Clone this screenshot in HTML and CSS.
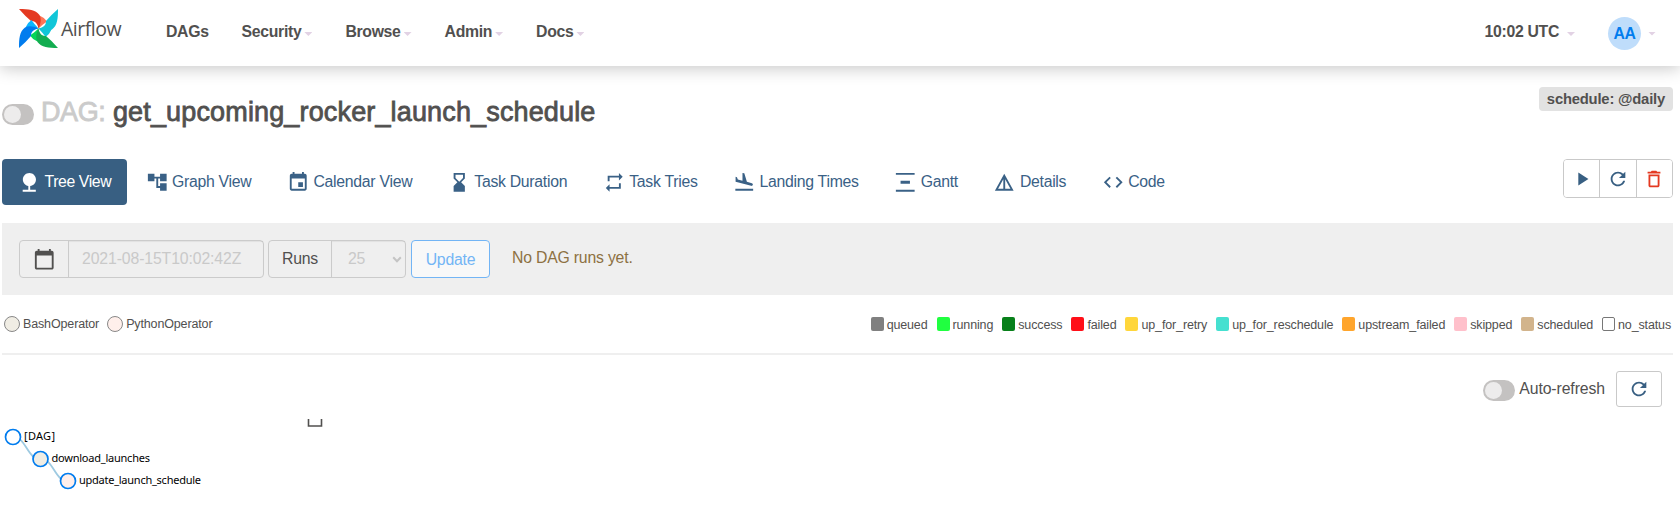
FILE: index.html
```html
<!DOCTYPE html>
<html lang="en">
<head>
<meta charset="utf-8">
<title>get_upcoming_rocker_launch_schedule - Tree - Airflow</title>
<link rel="stylesheet" href="styles.css">
</head>
<body>
<svg class="sprite" width="0" height="0">
  <symbol id="i-refresh" viewBox="0 0 24 24"><path d="M17.65 6.35C16.2 4.9 14.21 4 12 4c-4.42 0-7.99 3.58-7.99 8s3.57 8 7.99 8c3.73 0 6.84-2.55 7.73-6h-2.08c-.82 2.33-3.04 4-5.65 4-3.31 0-6-2.69-6-6s2.69-6 6-6c1.66 0 3.14.69 4.22 1.78L13 11h7V4l-2.35 2.35z"/></symbol>
</svg>
<header class="navbar">
  <a class="brand">
    <svg class="pinwheel" width="39" height="39" viewBox="-19.5 -19.5 39 39">
      <g><path fill="#ff7557" d="M0 0L1-13Q6-11 8.500-7Q4-4 0 0z"/><path fill="#e43921" d="M-19.500-19.500C-10-19.500-3-19 1-13.500C3-10 2.500-5 0 0C-1-5-3-7.500-7.500-7.500Q-13-12-19.500-19.500z"/></g>
      <g transform="rotate(90)"><path fill="#11c6d8" d="M0 0L1-13Q6-11 8.500-7Q4-4 0 0z"/><path fill="#11c6d8" d="M-19.500-19.500C-10-19.500-3-19 1-13.500C3-10 2.500-5 0 0C-1-5-3-7.500-7.500-7.500Q-13-12-19.500-19.500z"/></g>
      <g transform="rotate(180)"><path fill="#04d659" d="M0 0L1-13Q6-11 8.500-7Q4-4 0 0z"/><path fill="#13ad50" d="M-19.500-19.500C-10-19.500-3-19 1-13.500C3-10 2.500-5 0 0C-1-5-3-7.500-7.500-7.500Q-13-12-19.500-19.500z"/></g>
      <g transform="rotate(270)"><path fill="#0cb6ff" d="M0 0L1-13Q6-11 8.500-7Q4-4 0 0z"/><path fill="#017cee" d="M-19.500-19.500C-10-19.500-3-19 1-13.500C3-10 2.500-5 0 0C-1-5-3-7.500-7.500-7.500Q-13-12-19.500-19.500z"/></g>
    </svg>
    <span class="brand-name">Airflow</span>
  </a>
  <nav class="menu">
    <a>DAGs</a>
    <a>Security<i class="caret"></i></a>
    <a>Browse<i class="caret"></i></a>
    <a>Admin<i class="caret"></i></a>
    <a>Docs<i class="caret"></i></a>
  </nav>
  <div class="clock">10:02 UTC<i class="caret"></i></div>
  <div class="user"><span class="avatar">AA</span><i class="caret"></i></div>
</header>

<main class="page">
  <div class="title-row">
    <span class="toggle"></span>
    <h1><span class="muted">DAG:</span> <span class="dag-name">get_upcoming_rocker_launch_schedule</span></h1>
    <span class="schedule">schedule: @daily</span>
  </div>

  <div class="tab-row">
    <nav class="tabs">
      <a class="tab active"><svg class="icon" viewBox="0 0 24 24"><path d="M13 16.12c3.47-.41 6.170-3.360 6.170-6.950 0-3.870-3.130-7-7-7s-7 3.130-7 7c0 3.470 2.520 6.340 5.830 6.890V20H5v2h14v-2h-6v-3.880z"/></svg><span>Tree View</span></a>
      <a class="tab"><svg class="icon" viewBox="0 0 24 24"><path d="M22 11V3h-7v3H9V3H2v8h7V8h2v10h4v3h7v-8h-7v3h-2V8h2v3z"/></svg><span>Graph View</span></a>
      <a class="tab"><svg class="icon" viewBox="0 0 24 24"><path d="M17 12h-5v5h5v-5zM16 1v2H8V1H6v2H5c-1.110 0-1.990.9-1.990 2L3 19c0 1.100.89 2 2 2h14c1.100 0 2-.9 2-2V5c0-1.100-.9-2-2-2h-1V1h-2zm3 18H5V8h14v11z"/></svg><span>Calendar View</span></a>
      <a class="tab"><svg class="icon" viewBox="0 0 24 24"><path d="M18 22l-.01-6L14 12l3.990-4.010L18 2H6v6l4 4-4 3.990V22h12zM8 7.500V4h8v3.500l-4 4-4-4z"/></svg><span>Task Duration</span></a>
      <a class="tab"><svg class="icon" viewBox="0 0 24 24"><path d="M7 7h10v3l4-4-4-4v3H5v6h2V7zm10 10H7v-3l-4 4 4 4v-3h12v-6h-2v4z"/></svg><span>Task Tries</span></a>
      <a class="tab"><svg class="icon" viewBox="0 0 24 24"><path d="M2.500 19h19v2h-19v-2zm16.840-3.150c.8.210 1.620-.26 1.840-1.060.21-.8-.26-1.620-1.060-1.840l-5.310-1.420-2.760-9.020L10.120 2v8.280L5.150 8.950l-.93-2.320-1.450-.39v5.170l16.570 4.440z"/></svg><span>Landing Times</span></a>
      <a class="tab"><svg class="icon" viewBox="0 0 24 24"><path d="M22 2v2H2V2h20zM7 10.500v3h10v-3H7zM2 20v2h20v-2H2z"/></svg><span>Gantt</span></a>
      <a class="tab"><svg class="icon" viewBox="0 0 24 24"><path d="M12 3L2 21h20L12 3zm1 5.920L18.600 19H13V8.920zm-2 0V19H5.400L11 8.920z"/></svg><span>Details</span></a>
      <a class="tab"><svg class="icon" viewBox="0 0 24 24"><path d="M9.400 16.600L4.800 12l4.600-4.600L8 6l-6 6 6 6 1.400-1.400zm5.200 0l4.600-4.600-4.600-4.600L16 6l6 6-6 6-1.400-1.400z"/></svg><span>Code</span></a>
    </nav>
    <div class="actions">
      <button><svg class="icon-sm" viewBox="0 0 24 24"><path d="M8 5v14l11-7z"/></svg></button>
      <button><svg class="icon-sm"><use href="#i-refresh"/></svg></button>
      <button class="danger"><svg class="icon-sm" viewBox="0 0 24 24"><path d="M6 19c0 1.100.9 2 2 2h8c1.100 0 2-.9 2-2V7H6v12zM8 9h8v10H8V9zm7.500-5l-1-1h-5l-1 1H5v2h14V4h-3.500z"/></svg></button>
    </div>
  </div>

  <form class="filter">
    <div class="group date">
      <span class="addon"><svg class="icon" viewBox="0 0 24 24"><path d="M20 3h-1V1h-2v2H7V1H5v2H4c-1.100 0-2 .9-2 2v16c0 1.100.9 2 2 2h16c1.100 0 2-.9 2-2V5c0-1.100-.9-2-2-2zm0 18H4V8h16v13z"/></svg></span>
      <span class="field">2021-08-15T10:02:42Z</span>
    </div>
    <div class="group runs">
      <span class="addon">Runs</span>
      <span class="field">25<svg class="chevron" viewBox="0 0 10 7"><path d="M1.200 1.200L5 5.200l3.800-4"/></svg></span>
    </div>
    <span class="update">Update</span>
    <span class="notice">No DAG runs yet.</span>
  </form>

  <div class="legend">
    <div class="operators">
      <span><i class="bash"></i>BashOperator</span>
      <span><i class="python"></i>PythonOperator</span>
    </div>
    <div class="states">
      <span><i class="queued"></i>queued</span>
      <span><i class="running"></i>running</span>
      <span><i class="success"></i>success</span>
      <span><i class="failed"></i>failed</span>
      <span><i class="retry"></i>up_for_retry</span>
      <span><i class="reschedule"></i>up_for_reschedule</span>
      <span><i class="upstream"></i>upstream_failed</span>
      <span><i class="skipped"></i>skipped</span>
      <span><i class="scheduled"></i>scheduled</span>
      <span><i class="none"></i>no_status</span>
    </div>
  </div>

  <div class="refresh-row">
    <span class="toggle"></span>
    <span class="refresh-label">Auto-refresh</span>
    <button class="refresh"><svg class="icon-sm"><use href="#i-refresh"/></svg></button>
  </div>

  <svg class="tree" width="400" height="92" viewBox="0 410 400 92">
    <path class="axis" d="M308.500 419v7h13V419"/>
    <g class="links"><path d="M13 437C26.500 437 26.500 459 40.500 459"/><path d="M40.500 459C54 459 54 481 68 481"/></g>
    <g class="nodes"><circle cx="13" cy="437" r="7.500" fill="#fff"/><circle cx="40.500" cy="459" r="7.500" fill="#f0ede4"/><circle cx="68" cy="481" r="7.500" fill="#ffefeb"/></g>
    <text x="24" y="440" textLength="31">[DAG]</text>
    <text x="51.500" y="462" textLength="98.500">download_launches</text>
    <text x="79" y="484" textLength="122">update_launch_schedule</text>
  </svg>
</main>
</body>
</html>
```

FILE: styles.css
```css
* { box-sizing: border-box; }
body {
  margin: 0;
  height: 509px;
  overflow: hidden;
  background: #fff;
  color: #51504f;
  font: 15.800px/20px "Liberation Sans", Arial, sans-serif;
  letter-spacing: -.2px;
}
.sprite { position: absolute; }
svg { display: block; flex: none; fill: currentColor; }
i { display: block; flex: none; }

.navbar {
  display: flex;
  height: 66px;
  padding-left: 19px;
  background: #fff;
  box-shadow: 0 2px 16px rgba(0, 0, 0, .23);
  font-weight: bold;
  letter-spacing: -.32px;
}
.brand { display: flex; width: 147px; padding-top: 9px; gap: 3px; }
.brand-name { padding-top: 9px; font: 400 19.500px/22px "Open Sans", sans-serif; letter-spacing: -.5px; }
.menu { display: flex; padding-top: 20px; gap: 33px; }
.menu a { display: flex; height: 24px; align-items: center; }
.menu a .caret { margin-left: 3px; }
.caret { width: 8px; height: 4px; margin-top: 4px; background: #e2d2e4; clip-path: polygon(0 0, 100% 0, 50% 100%); }
.clock { display: flex; height: 24px; margin: 20px 33px 0 auto; align-items: center; gap: 8px; }
.user { display: flex; height: 33px; margin: 17px 24px 0 0; align-items: center; gap: 7px; }
.user .caret { margin-top: 0; }
.avatar { width: 33px; height: 33px; border-radius: 50%; background: #bfddfb; color: #017cee; text-align: center; line-height: 34px; letter-spacing: -.5px; }

.page { padding: 0 7px 0 2px; }
.title-row { display: flex; height: 93px; padding-top: 21px; }
.toggle { flex: none; width: 32px; height: 21px; border-radius: 11px; background: #c4c2c1; padding: 2px; }
.toggle::before { content: ""; display: block; width: 17px; height: 17px; border-radius: 50%; background: #edecec; }
.title-row .toggle { margin: 17px 7px 0 0; }
h1 { margin: 9px 0 0; font: 27px/32px "Liberation Sans", Arial, sans-serif; letter-spacing: 0; white-space: nowrap; -webkit-text-stroke: .8px currentColor; }
.muted { color: #cbcbcb; letter-spacing: -.4px; }
.dag-name { letter-spacing: .15px; }
.schedule { height: 24px; margin-left: auto; padding: 0 8px; border-radius: 4px; background: #e2e2e2; font-weight: bold; font-size: 14.800px; line-height: 24px; }

.tab-row { display: flex; justify-content: space-between; height: 64px; }
.tabs { display: flex; gap: 2.500px; letter-spacing: -.28px; }
.tab { display: flex; height: 46px; padding: 0 17px 0 16px; align-items: center; gap: 4px; border-radius: 4px; color: #3a6186; white-space: nowrap; }
.tab.active { width: 125px; background: #385f82; color: #fff; letter-spacing: -.4px; }
.icon { width: 22.500px; height: 22.500px; }
.icon-sm { width: 22px; height: 22px; }
button { display: flex; align-items: center; justify-content: center; padding: 0; background: #fff; border: 0; color: #385f82; }
.actions { display: flex; width: 110px; height: 39px; border: 1px solid #c9c9c9; border-radius: 4px; overflow: hidden; }
.actions button { flex: 1; border-left: 1px solid #c9c9c9; }
.actions button:first-child { border-left: 0; }
.actions .danger { color: #e43921; }

.filter { display: flex; height: 72px; padding: 17px; background: #efefef; gap: 4px; }
.group { display: flex; height: 38px; border: 1px solid #cbcbcb; border-radius: 4px; }
.addon { display: flex; align-items: center; justify-content: center; border-right: 1px solid #cbcbcb; }
.field { display: flex; flex: 1; align-items: center; color: #c9c9c9; box-shadow: inset 0 1px 1px rgba(0, 0, 0, .06); }
.date { width: 245px; }
.date .addon { width: 49px; }
.date .field { padding-left: 13px; letter-spacing: -.12px; }
.runs { width: 138px; }
.runs .addon { width: 63px; }
.runs .field { padding: 0 3px 0 16px; justify-content: space-between; }
.chevron { width: 10px; height: 7px; fill: none; stroke: #c4c4c4; stroke-width: 2; }
.update { width: 79px; height: 38px; margin-left: 1px; border: 1px solid #73b5f5; border-radius: 4px; background: #f8f8f8; color: #73b5f5; text-align: center; line-height: 38px; }
.notice { margin-left: 18px; color: #8d7142; line-height: 35px; }

.legend { display: flex; height: 60px; justify-content: space-between; border-bottom: 2px solid #efefef; font-size: 12.500px; line-height: 16px; letter-spacing: -.14px; white-space: nowrap; }
.operators, .states { display: flex; }
.legend span { display: flex; }
.operators { gap: 8px; padding: 21px 0 0 2px; }
.operators i { width: 16px; height: 16px; margin-right: 3px; border: 1px solid #888; border-radius: 50%; }
.states { gap: 9px; padding: 22px 2px 0 0; }
.states i { width: 13px; height: 14px; margin-right: 3px; border-radius: 2px; }
.bash { background: #f0ede4; }
.python { background: #ffefeb; }
.queued { background: #808080; }
.running { background: #20ff40; }
.success { background: #08801a; }
.failed { background: #ff0f18; }
.retry { background: #ffd63b; }
.reschedule { background: #45e0d0; }
.upstream { background: #ffa52c; }
.skipped { background: #ffc0cb; }
.scheduled { background: #d2b48c; }
.none { border: 1px solid #777; }

.refresh-row { display: flex; height: 55px; padding: 16px 11px 0 0; justify-content: flex-end; }
.refresh-row .toggle { margin-top: 9px; }
.refresh-label { margin: 8px 11px 0 4px; line-height: 20px; letter-spacing: -.1px; }
.refresh { width: 46px; height: 36px; border: 1px solid #c9c9c9; border-radius: 3px; }

.tree { margin-left: -2px; letter-spacing: 0; }
.axis { fill: none; stroke: #51504f; stroke-width: 1.600; }
.links { fill: none; stroke: #9ecae1; stroke-width: 1.800; }
.nodes { stroke: #017cee; stroke-width: 1.700; }
.tree text { fill: #000; font: 11px "Noto Sans", sans-serif; }
```
